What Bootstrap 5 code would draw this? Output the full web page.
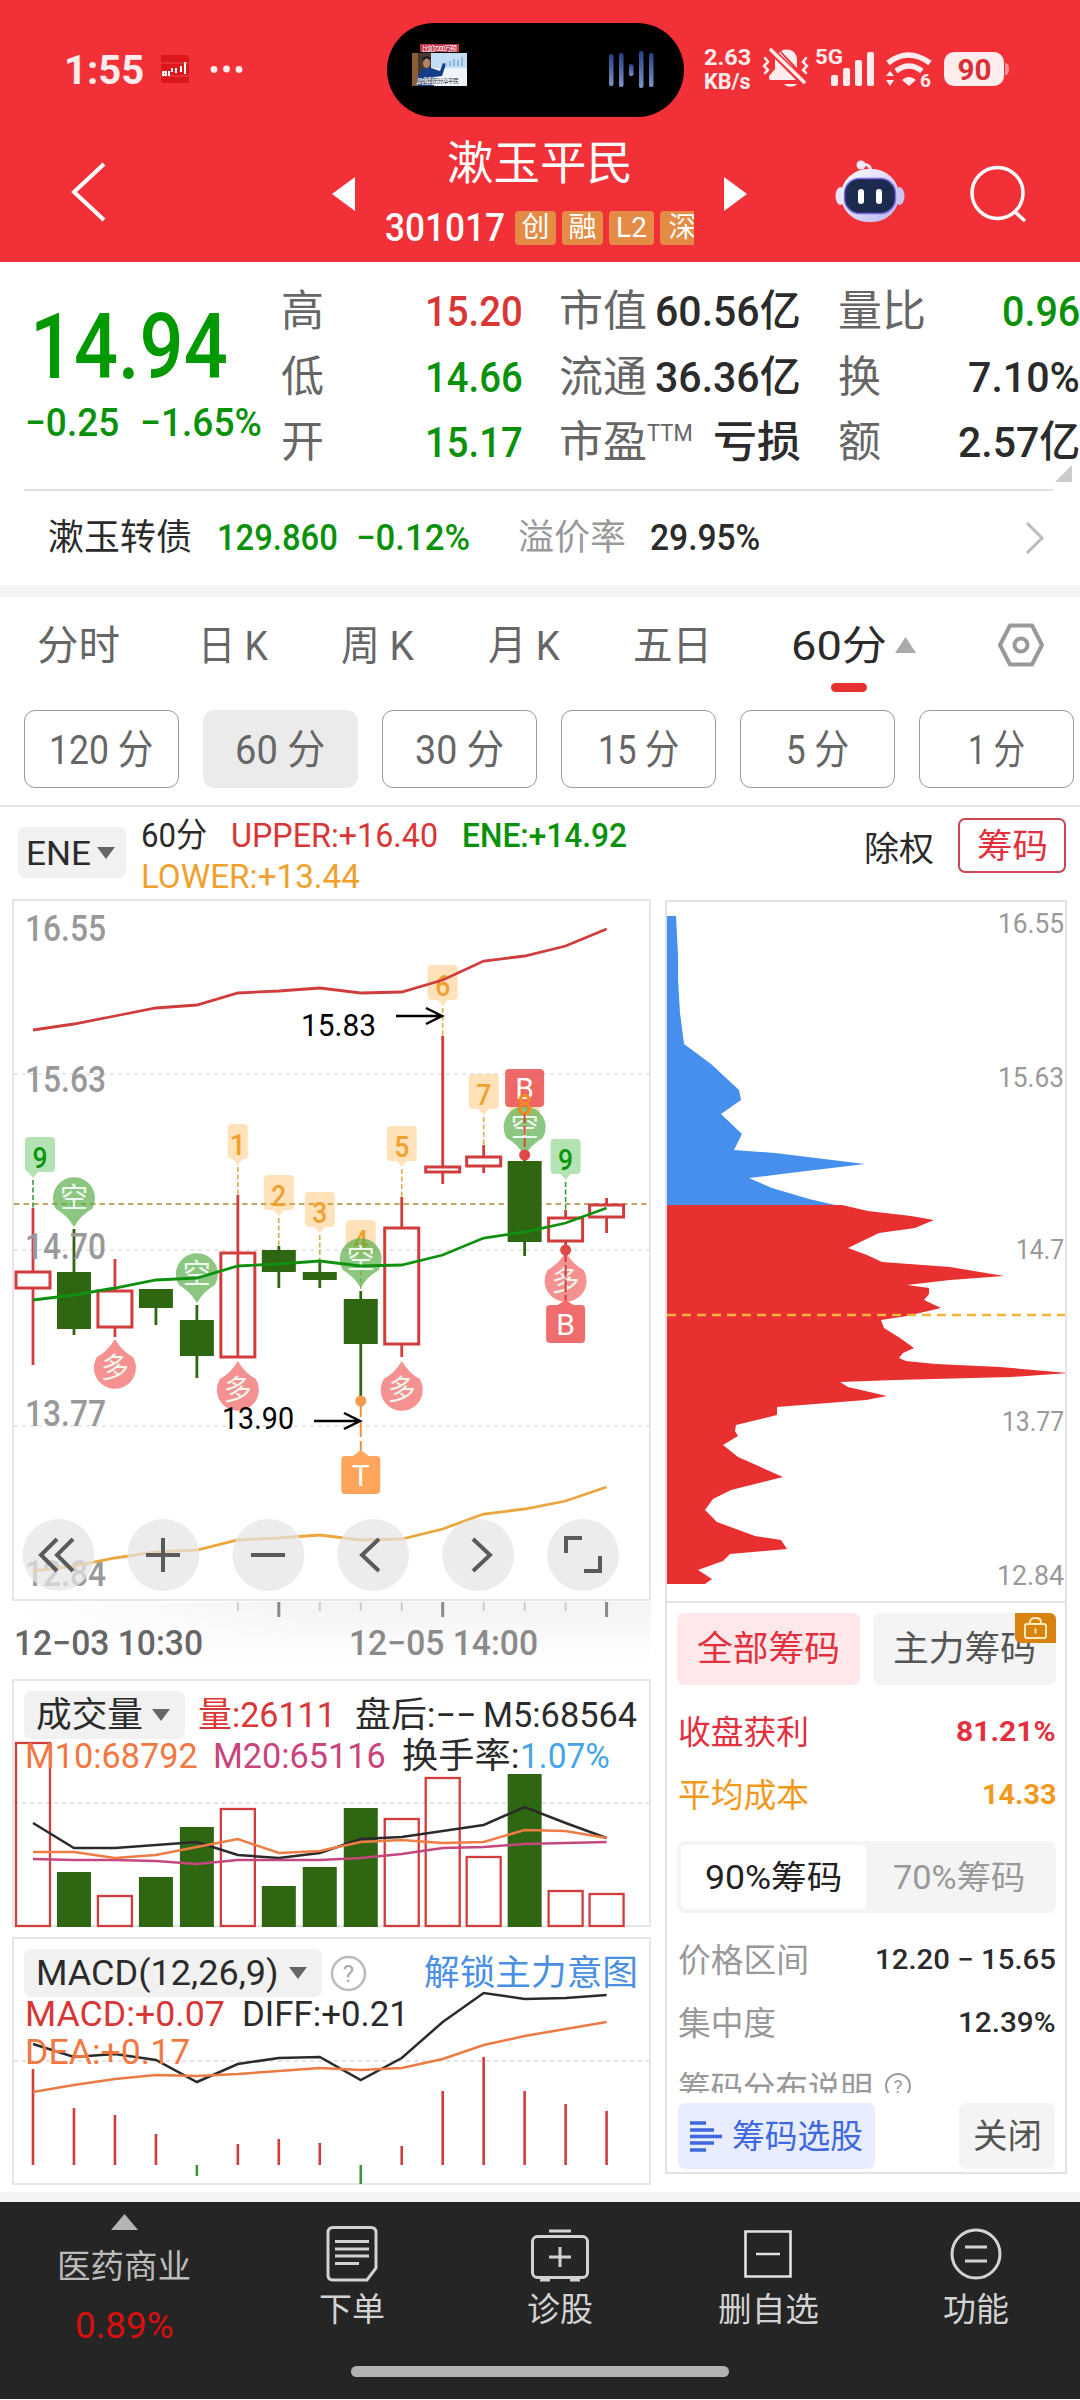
<!DOCTYPE html>
<html lang="zh-CN">
<head>
<meta charset="utf-8">
<title>漱玉平民 301017</title>
<link rel="stylesheet" href="https://cdn.jsdelivr.net/npm/bootstrap@5.3.0/dist/css/bootstrap.min.css">
<style>
body{width:1080px;height:2400px;overflow:hidden;background:#fff;color:#2b2b2b;font-family:Roboto,"Noto Sans CJK SC",sans-serif;line-height:1}
svg{display:block;flex:none}
svg text{font-family:Roboto,"Noto Sans CJK SC",sans-serif}
[data-w]{display:inline-block;white-space:nowrap;transform-origin:left center;flex:none}
.up{color:#d93636}.down{color:#099109}.gold{color:#f0a02c}
.w5{font-weight:500}
.topbar{background:#f23037;height:262px;color:#fff}
.status{display:grid;grid-template-columns:387px 297px 1fr;height:140px}
.clock{font-size:41px;font-weight:700;color:#ffecec;margin-left:64px}
.island{height:94px;margin-top:23px;border-radius:47px;background:#000}
.speed{font-size:22px;font-weight:700;color:#ffecec;margin-left:20px;line-height:24px;width:55px}
.titlebar{display:grid;grid-template-columns:332px 24px 368px 24px 1fr;height:122px}
.stock{font-size:46px;height:46px}
.codeline{margin:25px 0 0 29px;width:309px;height:34px;gap:6px;overflow:hidden;font-size:39px}
.tagbox{background:#e48b45;border-radius:4px;height:34px;width:41px;font-size:28px;flex:none}
.tagbox.wide{width:45px}
.quote{display:grid;grid-template-columns:281px 278px 279px 242px;height:227px}
.lastprice{font-size:90px;font-weight:500;color:#009900;margin:40px 0 0 30px;height:92px}
.chg{font-size:39px;margin-left:25px;gap:21px}
.qcol{padding-top:17px;font-size:43px}
.qcol>div{height:65.5px}
.lab{color:#666}
.c1{padding-right:36px}.c2{padding-right:37px}
.ttm{font-size:23px;margin-bottom:18px}
.fold{right:8px;top:203px}
.bond{margin:0 27px 0 24px;border-top:2px solid #e0e0e0;height:96px;font-size:36px;padding-left:24px}
.band{background:#f4f4f4;height:12px}
.tabs{height:95px;display:grid;justify-items:start;grid-template-columns:161px 143px 147px 145px 156px 193px 1fr;padding-left:37px;font-size:41px;color:#666}
.tabs>span{padding-top:4px}
.tabs .on{color:#2b2b2b;padding-left:2px}
.redbar{width:36px;height:9px;border-radius:5px;background:#e63030;left:42px;bottom:0}
.pills{margin-top:18px;padding-left:24px;gap:24px;height:97px;border-bottom:2px solid #e6e6e6;font-size:41px;color:#666}
.pillbox{width:155px;height:78px;border:1.5px solid #999;border-radius:11px;flex:none;padding-top:2px}
.pillbox.on{background:#ebebeb;border-color:#ebebeb}
.legendrow{height:88px;padding-left:18px;font-size:34px}
.drop{background:#f1f1f1;border-radius:7px}
.ene{width:108px;height:51px;margin-top:20px;padding-left:8px;gap:6px}
.lines{margin:7px 0 0 15px;width:723px}
.lines>div{height:41px;gap:24px}
.chipbtn{width:108px;height:55px;border:2px solid #cf4452;border-radius:7px;color:#e2303f;margin:11px 12px 0 24px}
.leftcol{width:660px}
.indic{left:24px;right:22px;font-size:35px}
.r1{height:48px}.r2{height:34px}
.volbtn{width:161px;height:48px;padding-left:12px;gap:9px}
.macdbtn{width:298px;height:48px;padding-left:12px;gap:10px}
.panel{width:402px;height:1274px;margin:5px 0 0 5px;border:2px solid #e2e2e2}
.chipinfo{border-top:2px solid #e2e2e2;padding:10px 9px 0 10px;font-size:33px}
.bigbtn{width:183px;height:72px;border-radius:7px;font-size:35px}
.all{background:#ffe8ea;color:#e2303f}.main{background:#f4f4f4;color:#555}
.lockbadge{right:0;top:0;width:41px;height:30px;background:#d8820f;border-radius:0 6px 0 6px}
.inforow{height:63px;padding-left:1px}
.seg{background:#f4f4f4;border-radius:8px;height:72px;padding:4px;color:#999;margin-top:14px}
.seg .on{background:#fff;color:#222;width:185px;height:64px;border-radius:5px}
.clipped{height:38px;overflow:hidden;padding:17px 0 0 1px;gap:11px;color:#999}
.foot{margin:10px 1px 0 1px}
.pick{width:197px;height:66px;background:#e8edff;border-radius:7px;color:#3f68e0;gap:10px;padding-left:12px}
.closebtn{width:96px;height:66px;background:#f4f4f4;border-radius:7px;color:#555;font-size:34px}
.bottomnav{background:#252525;height:197px;display:grid;grid-template-columns:248px repeat(4,208px);color:#d2d2d2;font-size:33px}
.home{width:378px;height:11px;border-radius:6px;background:#b3b3b3;left:351px;bottom:22px}
.navicon{height:58px;margin-top:22px}
.navtext{margin-top:11px}
</style>
</head>
<body>
<header class="topbar">
  <div class="status">
    <div class="d-flex align-items-center">
      <span class="clock" data-w="80">1:55</span>
      <svg style="margin-left:11px" width="100" height="40" viewBox="155 50 100 40"><rect x="161" y="55" width="28" height="28" rx="2" fill="#dc171d"/><path d="M161 63h28M161 76h28" stroke="#ee4a4a" stroke-width="1"/><path d="M163 75h3v-3h-3zM169 76v-5M172 72v-4M176 73v-5M181 72v-6M185 74V62" stroke="#fff" stroke-width="2" fill="none"/><g fill="#ffecec"><circle cx="214" cy="69.500" r="3.400"/><circle cx="226.500" cy="69" r="3.400"/><circle cx="239" cy="69.500" r="3.400"/></g></svg>
    </div>
    <div class="island">
      <svg width="297" height="94" viewBox="387 23 297 94">
        <defs><linearGradient id="wv" x1="0" y1="0" x2="0" y2="1"><stop offset="0" stop-color="#253f85"/><stop offset="1" stop-color="#7f95c4"/></linearGradient></defs>
        <rect x="420" y="44" width="39" height="8" fill="#bf3144"/><text x="422" y="51" font-size="7" fill="#fff" textLength="35">比如7200万预</text>
        <rect x="412" y="53" width="55" height="33" fill="#c3ddf5"/><rect x="412" y="53" width="19" height="33" fill="#4a3931"/><path d="M412 53h6v33h-6z" fill="#8b5c37"/><path d="M430 68h37v18h-37z" fill="#edf5fb"/><path d="M418 86c-1-10 1-16 7-18h6l9 3 3-8 3 1-4 12-8 1v9z" fill="#143f86"/><ellipse cx="426.500" cy="63" rx="3.500" ry="5" fill="#b98168"/><path d="M423 60q3-5 7-1" stroke="#151515" stroke-width="2" fill="none"/><path d="M446 66v-3M450 66v-5M454 66v-7M458 66v-6M462 66v-9" stroke="#91b7e5" stroke-width="2"/><text x="417" y="83" font-size="6" fill="#223" stroke="#fff" stroke-width="1" paint-order="stroke" textLength="42">从业经历分享平民</text>
        <g fill="url(#wv)"><rect x="609" y="54" width="4.500" height="32" rx="2"/><rect x="619" y="53" width="4.500" height="34" rx="2"/><rect x="629" y="64" width="4.500" height="12" rx="2"/><rect x="639" y="51" width="4.500" height="37" rx="2"/><rect x="649" y="53" width="4.500" height="34" rx="2"/></g>
      </svg>
    </div>
    <div class="d-flex align-items-center">
      <div class="speed"><div data-w="47">2.63</div><div data-w="47">KB/s</div></div>
      <svg width="260" height="50" viewBox="759 45 260 50">
        <g fill="#ffecec">
          <path d="M785 85a6 3 0 0 0 11 0l1-1h-13zM769 79v-3l6-7V60c0-4 3-7 5-8l19 22 4 5-1 1h-32zM781 51c9-4 16 1 16 9v8z"/>
          <text x="815" y="64" font-size="21" font-weight="700" textLength="28" lengthAdjust="spacingAndGlyphs">5G</text>
          <rect x="831" y="75" width="7" height="11" rx="2"/><rect x="843" y="68" width="7" height="18" rx="2"/><rect x="855" y="60" width="7" height="26" rx="2"/><rect x="867" y="52" width="7" height="34" rx="2"/>
          <path d="M902 80q7-6 14 0l-7 6zM886 76l4-5 4 5zM886 80l4 6 4-6z"/>
          <text x="920" y="87" font-size="19" font-weight="700">6</text>
          <rect x="944" y="52" width="60" height="34" rx="10"/>
        </g>
        <path d="M1005 63q4 0 4 6t-4 6z" fill="#f79194"/>
        <text x="957.500" y="80" font-size="29" font-weight="700" fill="#d93037" textLength="34" lengthAdjust="spacingAndGlyphs">90</text>
        <g fill="none" stroke="#ffecec" stroke-linecap="round"><path d="M771 50l33 33" stroke="#f23037" stroke-width="7"/><path d="M771 50l33 32" stroke-width="3.600"/><path d="M765 58l3 4-4 4 4 4-3 3M806 58l-3 4 4 4-4 4 3 3" stroke-width="2.500"/><path d="M888 63q20-16 42 0M896 71q13-10 26 0" stroke-width="5.500" stroke-linecap="butt"/></g>
      </svg>
    </div>
  </div>
  <div class="titlebar">
    <svg width="332" height="122" viewBox="0 140 332 122"><path d="M104 164 74 192l30 28" fill="none" stroke="#fff" stroke-width="4"/></svg>
    <svg width="24" height="108" viewBox="0 0 24 108"><path d="M0 54 23 37v34z" fill="#fff"/></svg>
    <div>
      <div class="stock d-flex align-items-center justify-content-center"><span data-w="186">漱玉平民</span></div>
      <div class="codeline d-flex align-items-center">
        <span class="w5" data-w="120">301017</span>
        <span class="tagbox ms-1 d-flex align-items-center justify-content-center">创</span>
        <span class="tagbox d-flex align-items-center justify-content-center">融</span>
        <span class="tagbox wide d-flex align-items-center justify-content-center">L2</span>
        <span class="tagbox wide d-flex align-items-center justify-content-center">深</span>
      </div>
    </div>
    <svg width="24" height="108" viewBox="0 0 24 108"><path d="M23 54 0 37v34z" fill="#fff"/></svg>
    <svg width="332" height="122" viewBox="748 140 332 122">
      <defs><linearGradient id="bot" x1="0" y1="0" x2="1" y2="1"><stop offset="0" stop-color="#fff"/><stop offset="1" stop-color="#b9b4ef"/></linearGradient></defs>
      <path d="M861 165q9-2 10 6" stroke="#ece6fa" stroke-width="3" fill="none"/><circle cx="861" cy="165" r="4.500" fill="#f1e9fa"/>
      <ellipse cx="840.500" cy="196" rx="5" ry="9" fill="#e9e6fb"/><ellipse cx="899.500" cy="196" rx="5" ry="9" fill="#c9c4f4"/>
      <rect x="841" y="169" width="58" height="53" rx="27" fill="url(#bot)"/><rect x="844.500" y="178.500" width="51" height="35" rx="15" fill="#1c2a4d" stroke="#7c6ae0" stroke-width="1.500"/>
      <rect x="858" y="189" width="6" height="15" rx="3" fill="#fff"/><rect x="876" y="189" width="6" height="15" rx="3" fill="#fff"/>
      <g fill="none" stroke="#fff" stroke-width="3.500"><circle cx="997.500" cy="193" r="25.500"/><path d="M1014 211l11 10"/></g>
    </svg>
  </div>
</header>

<section class="quote position-relative">
  <div>
    <div class="lastprice d-flex align-items-center"><span data-w="198">14.94</span></div>
    <div class="chg d-flex align-items-center down w5" style="padding-top:10px"><span data-w="94">−0.25</span><span data-w="122">−1.65%</span></div>
  </div>
  <div class="qcol c1">
    <div class="d-flex align-items-center justify-content-between"><span class="lab">高</span><span class="up w5" data-w="98">15.20</span></div>
    <div class="d-flex align-items-center justify-content-between"><span class="lab">低</span><span class="down w5" data-w="98">14.66</span></div>
    <div class="d-flex align-items-center justify-content-between"><span class="lab">开</span><span class="down w5" data-w="98">15.17</span></div>
  </div>
  <div class="qcol c2">
    <div class="d-flex align-items-center justify-content-between"><span class="lab" data-w="88">市值</span><span class="w5" data-w="146">60.56亿</span></div>
    <div class="d-flex align-items-center justify-content-between"><span class="lab" data-w="88">流通</span><span class="w5" data-w="146">36.36亿</span></div>
    <div class="d-flex align-items-center"><span class="lab" data-w="88">市盈</span><span class="lab ttm" data-w="46">TTM</span><span class="w5 ms-auto" data-w="88">亏损</span></div>
  </div>
  <div class="qcol">
    <div class="d-flex align-items-center justify-content-between"><span class="lab" data-w="88">量比</span><span class="down w5" data-w="78">0.96</span></div>
    <div class="d-flex align-items-center justify-content-between"><span class="lab">换</span><span class="w5" data-w="112">7.10%</span></div>
    <div class="d-flex align-items-center justify-content-between"><span class="lab">额</span><span class="w5" data-w="122">2.57亿</span></div>
  </div>
  <svg class="fold position-absolute" width="17" height="17"><path d="M17 0v17H0z" fill="#ccc"/></svg>
</section>
<section class="bond d-flex align-items-center">
  <span data-w="144">漱玉转债</span><span class="down w5" style="margin-left:25px" data-w="121">129.860</span><span class="down w5" style="margin-left:18px" data-w="114">−0.12%</span>
  <span class="ms-5" style="color:#999" data-w="108">溢价率</span><span class="w5 ms-4" data-w="110">29.95%</span>
  <svg class="ms-auto me-2" width="20" height="34"><path d="M2 2l15 15L2 32" fill="none" stroke="#bbb" stroke-width="3"/></svg>
</section>
<div class="band"></div>

<nav class="tabs align-items-center">
  <span data-w="83">分时</span><span data-w="70">日 K</span><span data-w="73">周 K</span><span data-w="72">月 K</span><span data-w="79">五日</span>
  <div class="on position-relative h-100 d-flex align-items-center"><span class="pt-1" data-w="96">60分</span><svg class="ms-2" width="21" height="16"><path d="M10.500 0 21 16H0z" fill="#aaa"/></svg><i class="redbar position-absolute"></i></div>
  <svg class="ms-3" width="48" height="48" viewBox="-24 -24 48 48"><g transform="translate(-1 0)" fill="none" stroke="#999" stroke-width="4" stroke-linejoin="round"><path d="M-11-19.500h22L21 0 11 19.500h-22L-21 0z"/><circle r="6.500"/></g></svg>
</nav>
<div class="pills d-flex">
  <span class="pillbox d-flex align-items-center justify-content-center"><span data-w="104">120 分</span></span>
  <span class="pillbox on d-flex align-items-center justify-content-center"><span data-w="90">60 分</span></span>
  <span class="pillbox d-flex align-items-center justify-content-center"><span data-w="89">30 分</span></span>
  <span class="pillbox d-flex align-items-center justify-content-center"><span data-w="81">15 分</span></span>
  <span class="pillbox d-flex align-items-center justify-content-center"><span data-w="63">5 分</span></span>
  <span class="pillbox d-flex align-items-center justify-content-center"><span data-w="57">1 分</span></span>
</div>
<div class="legendrow d-flex">
  <div class="drop ene d-flex align-items-center"><span data-w="65">ENE</span><svg width="18" height="12"><path d="M0 0h18L9 12z" fill="#666"/></svg></div>
  <div class="lines">
    <div class="d-flex align-items-center"><span data-w="66">60分</span><span class="up" data-w="207">UPPER:+16.40</span><span class="down w5" data-w="165">ENE:+14.92</span></div>
    <div class="d-flex align-items-center gold"><span data-w="219">LOWER:+13.44</span></div>
  </div>
  <div class="d-flex align-items-center" style="height:84px"><span data-w="70">除权</span></div>
  <div class="chipbtn d-flex align-items-center justify-content-center"><span data-w="71">筹码</span></div>
</div>

<main class="d-flex">
  <div class="leftcol">
    <svg id="price" width="660" height="776" viewBox="0 896 660 776"></svg>
    <div class="position-relative">
      <svg id="vol" width="660" height="262" viewBox="0 1672 660 262"></svg>
      <div class="indic position-absolute" style="top:20px">
        <div class="r1 d-flex align-items-center"><span class="drop volbtn d-flex align-items-center"><span data-w="107">成交量</span><svg width="18" height="12"><path d="M0 0h18L9 12z" fill="#666"/></svg></span><span class="up" style="margin-left:13px" data-w="138">量:26111</span><span style="margin-left:19px" data-w="122">盘后:−−</span><span style="margin-left:7px" data-w="154">M5:68564</span></div>
        <div class="r2 d-flex align-items-center"><span style="margin-left:1px;color:#f27842" data-w="173">M10:68792</span><span style="margin-left:15px;color:#c9447c" data-w="173">M20:65116</span><span style="margin-left:17px" data-w="117">换手率:</span><span style="color:#45a5e6" data-w="90">1.07%</span></div>
      </div>
    </div>
    <div class="position-relative">
      <svg id="macd" width="660" height="254" viewBox="0 1934 660 254"></svg>
      <div class="indic position-absolute" style="top:16px">
        <div class="r1 d-flex align-items-center"><span class="drop macdbtn d-flex align-items-center"><span data-w="243">MACD(12,26,9)</span><svg width="18" height="12"><path d="M0 0h18L9 12z" fill="#666"/></svg></span><svg class="ms-2" width="37" height="37"><circle cx="18.500" cy="18.500" r="16.500" fill="none" stroke="#bbb" stroke-width="2.500"/><text x="18.500" y="27" text-anchor="middle" font-size="24" fill="#aaa">?</text></svg><span class="ms-auto" style="color:#4a90e2" data-w="214">解锁主力意图</span></div>
        <div class="d-flex align-items-center" style="height:34px"><span class="up" style="margin-left:1px" data-w="200">MACD:+0.07</span><span style="margin-left:17px" data-w="167">DIFF:+0.21</span></div>
        <div class="d-flex align-items-center" style="height:42px"><span style="margin-left:1px;color:#f27842" data-w="165">DEA:+0.17</span></div>
      </div>
    </div>
  </div>
  <aside class="panel">
    <svg id="dist" width="398" height="699" viewBox="667 903 398 699"></svg>
    <div class="chipinfo">
      <div class="d-flex justify-content-between">
        <span class="bigbtn all d-flex align-items-center justify-content-center"><span data-w="143">全部筹码</span></span>
        <span class="bigbtn main position-relative d-flex align-items-center justify-content-center"><span data-w="143">主力筹码</span>
          <span class="lockbadge position-absolute d-flex align-items-center justify-content-center"><svg width="25" height="24"><g fill="none" stroke="#ffe9b5" stroke-width="2"><rect x="2" y="8" width="21" height="14" rx="2"/><path d="M7 8V6q0-4 5.500-4T18 6v2M12.500 12.500v5"/></g></svg></span></span>
      </div>
      <div class="inforow d-flex align-items-center justify-content-between" style="margin-top:16px;color:#e2303f"><span data-w="131">收盘获利</span><span class="fs-3 fw-bold" data-w="100">81.21%</span></div>
      <div class="inforow d-flex align-items-center justify-content-between" style="color:#f2991c"><span data-w="131">平均成本</span><span class="fs-3 fw-bold" data-w="74">14.33</span></div>
      <div class="seg d-flex"><span class="on d-flex align-items-center justify-content-center"><span data-w="137">90%筹码</span></span><span class="flex-fill d-flex align-items-center justify-content-center"><span data-w="132">70%筹码</span></span></div>
      <div class="inforow d-flex align-items-center justify-content-between mt-3"><span style="color:#999" data-w="131">价格区间</span><span class="fs-3 w5" data-w="181">12.20 − 15.65</span></div>
      <div class="inforow d-flex align-items-center justify-content-between"><span style="color:#999" data-w="98">集中度</span><span class="fs-3 w5" data-w="98">12.39%</span></div>
      <div class="clipped d-flex"><span data-w="195">筹码分布说明</span><svg width="28" height="28"><circle cx="14" cy="14" r="12" fill="none" stroke="#999" stroke-width="2"/><text x="14" y="21" font-size="19" text-anchor="middle" fill="#999">?</text></svg></div>
      <div class="foot d-flex justify-content-between">
        <span class="pick d-flex align-items-center"><svg width="32" height="31" viewBox="0 0 32 31"><path d="M0 2h16M0 9h24M0 15.500h32M0 22h24M0 29h16" stroke="#3f68e0" stroke-width="3.600"/></svg><span data-w="131">筹码选股</span></span>
        <span class="closebtn d-flex align-items-center justify-content-center"><span data-w="69">关闭</span></span>
      </div>
    </div>
  </aside>
</main>
<div class="band" style="height:10px;margin-top:5px"></div>

<footer class="bottomnav position-relative text-center">
  <div><svg class="mx-auto" style="margin-top:12px" width="27" height="16"><path d="M13.500 0 27 16H0z" fill="#b5b5b5"/></svg><div style="margin-top:20px;color:#bbb"><span data-w="134">医药商业</span></div><div style="margin-top:25px;color:#d90f0f;font-size:36px"><span data-w="99">0.89%</span></div></div>
  <div><svg class="navicon mx-auto" width="60" viewBox="-2 0 60 58"><g fill="none" stroke="#d2d2d2" stroke-width="3"><path d="M9 3.500h38q5 0 5 5V44l-9 12H9q-5 0-5-5V8.500q0-5 5-5zM11 17.500h34M11 25h34M11 32h34M11 39.500h24"/></g></svg><div class="navtext"><span data-w="66">下单</span></div></div>
  <div><svg class="navicon mx-auto" width="62" viewBox="0 0 62 58"><g fill="none" stroke="#d2d2d2" stroke-width="3"><rect x="3.500" y="12.500" width="55" height="41" rx="5"/><path d="M20 7h22M31 23v20M20 33h22" /><path d="M11 55.500h10M41 55.500h10" stroke-width="4"/></g></svg><div class="navtext"><span data-w="66">诊股</span></div></div>
  <div><svg class="navicon mx-auto" width="60" viewBox="0 0 60 58"><path d="M7.500 7.500h45v45h-45zM18 30h24" fill="none" stroke="#e2e2e2" stroke-width="2.600"/></svg><div class="navtext"><span data-w="101">删自选</span></div></div>
  <div><svg class="navicon mx-auto" width="60" viewBox="0 0 60 58"><g fill="none" stroke="#d2d2d2" stroke-width="3"><circle cx="30" cy="30" r="24"/><path d="M19 23h22M19 37h22"/></g></svg><div class="navtext"><span data-w="66">功能</span></div></div>
  <i class="home position-absolute"></i>
</footer>

<script src="https://cdn.jsdelivr.net/npm/bootstrap@5.3.0/dist/js/bootstrap.bundle.min.js"></script>
<script>
document.querySelectorAll('[data-w]').forEach(function (e) {
  var n = e.offsetWidth, w = +e.dataset.w;
  e.style.transform = 'scaleX(' + w / n + ')';
  e.style.marginRight = (w - n) + 'px';
});
var X = i => 33 + 40.97 * i, RED = '#d13c3c', GREEN = '#2f6612';
var rect = (x, y, w, h, f, r, extra) => `<rect x="${x}" y="${y}" width="${w}" height="${h}" fill="${f}" rx="${r || 0}" ${extra || ''}/>`;
var line = (x1, y1, x2, y2, c, w, extra) => `<path d="M${x1} ${y1}L${x2} ${y2}" stroke="${c}" stroke-width="${w}" fill="none" ${extra || ''}/>`;
var text = (x, y, s, size, c, w, extra) => `<text x="${x}" y="${y}" font-size="${size}" fill="${c}" ${w ? `textLength="${w}" lengthAdjust="spacingAndGlyphs"` : ''} ${extra || ''}>${s}</text>`;
var poly = (ys, c, w) => `<polyline points="${ys.map((y, i) => X(i) + ',' + y).join(' ')}" fill="none" stroke="${c}" stroke-width="${w}"/>`;
var frame = (y, h) => rect(13, y, 637, h, 'none', 0, 'stroke="#e6e6e6" stroke-width="2"');

// Price chart
var o = '<defs><linearGradient id="sh" x1="0" y1="0" x2="0" y2="1"><stop offset="0" stop-color="#f3f3f3"/><stop offset="1" stop-color="#fff"/></linearGradient><linearGradient id="fade" x1="0" y1="0" x2="1" y2="0"><stop offset="0" stop-color="#fff"/><stop offset="1" stop-color="#fff" stop-opacity="0"/></linearGradient></defs>';
o += rect(13, 1603, 638, 60, 'url(#sh)') + rect(13, 1603, 300, 60, 'url(#fade)') + frame(901, 700);
[1075, 1251, 1427].forEach(y => o += line(14, y, 650, y, '#e0e0e0', 1.5, 'stroke-dasharray="4 4"'));
o += line(14, 1205, 650, 1205, '#c0a468', 2, 'stroke-dasharray="5.500 4"');
// body top, body bottom, wick top, wick bottom, rising
[[1273,1289,1209,1366,1],[1273,1330,1230,1336,0],[1292,1328,1260,1338,1],[1290,1309,1290,1326,0],[1321,1357,1306,1379,0],[1254,1358,1196,1253,1],[1251,1273,1247,1289,0],[1273,1281,1262,1289,0],[1300,1345,1292,1402,0],[1229,1345,1198,1358,1],[1168,1173,1037,1185,1],[1158,1167,1146,1174,1],[1162,1243,1156,1257,0],[1219,1242,1211,1252,1],[1206,1218,1199,1234,1]].forEach((k, i) => {
  var x = X(i), c = k[4] ? RED : GREEN;
  if (k[4]) o += line(x, k[2], x, k[0], c, 2.8) + line(x, k[1], x, k[3], c, 2.8) + rect(x - 17, k[0], 34, k[1] - k[0], 'none', 0, `stroke="${c}" stroke-width="3"`);
  else o += line(x, k[2], x, k[3], c, 2.8) + rect(x - 17, k[0], 34, k[1] - k[0], c);
});
[['16.55', 942], ['15.63', 1093], ['14.70', 1260], ['13.77', 1427], ['12.84', 1587]].forEach(t => o += text(25, t[1], t[0], 36, '#999', 81, 'font-weight="500"'));
// numbered flags: index, number, top, dash end, green
[[0,9,1138,1209,1,-1],[5,1,1125,1196],[6,2,1176,1247],[7,3,1193,1262],[8,4,1221,1290],[9,5,1127,1198],[10,6,966,1037],[11,7,1075,1146],[12,8,1085,1156],[13,9,1140,1211,1]].forEach(f => {
  var x = X(f[0]), g = f[4], w = f[1] == 1 ? 20 : 30, l = f[5] ? x - 8 : x - w / 2;
  o += `<g fill="${g ? '#b3e2b3' : '#ffad3b'}" opacity="${g ? 1 : .35}"><rect x="${l}" y="${f[2]}" width="${w}" height="35" rx="4"/><path d="M${x - 5} ${f[2] + 35}h10l-5 6z"/></g>`;
  o += line(x, f[2] + 43, x, f[3], g ? '#3a9a3a' : '#d9ae4c', 1.6, 'stroke-dasharray="5 2.500"');
  o += text(l + w / 2, f[2] + 31, f[1], 29, g ? '#0b950b' : '#f0a02c', f[1] == 1 ? 0 : 15, 'text-anchor="middle" font-weight="500"');
});
var bubble = (i, cy, dir) => { var x = X(i), c = dir > 0 ? 'rgba(85,173,70,.68)' : 'rgba(241,98,98,.7)';
  return `<path d="M${x - 18} ${cy + dir * 11}A21 21 0 1 ${dir > 0 ? 1 : 0} ${x + 18} ${cy + dir * 11}Q${x + 7} ${cy + dir * 17} ${x} ${cy + dir * 29}Q${x - 7} ${cy + dir * 17} ${x - 18} ${cy + dir * 11}z" fill="${c}"/>` +
  text(x, cy + 10, dir > 0 ? '空' : '多', 28, '#eef8ee', 0, 'text-anchor="middle"'); };
[[1, 1199], [4, 1275], [8, 1260], [12, 1128]].forEach(b => o += bubble(b[0], b[1], 1));
[[2, 1369], [5, 1391], [9, 1391], [13, 1282]].forEach(b => o += bubble(b[0], b[1], -1));
o += poly([1031,1025,1017,1009,1006,994,992,989,994,993,981,962,957,947,930], RED, 2.8);
o += poly([1301,1296,1289,1281,1279,1267,1265,1262,1267,1266,1256,1239,1233,1224,1209], '#109010', 2.8);
o += poly([1572,1567,1559,1553,1551,1541,1539,1536,1541,1540,1530,1515,1510,1502,1488], '#eba73d', 2.8);
var box = (i, y, s, c) => rect(X(i) - 19.5, y, 39, 38, c, 4) + text(X(i), y + 30, s, 30, '#fff', 0, 'text-anchor="middle"');
o += '<g opacity=".88">' + box(12, 1070, 'B', '#ec5555') + '</g>' + text(X(12), 1116, '8', 29, '#f58a22', 15, 'text-anchor="middle" font-weight="500"');
o += line(X(12), 1115, X(12), 1156, '#d9493c', 2, 'stroke-dasharray="9 3"') + `<circle cx="${X(12)}" cy="1156" r="5.500" fill="#e04848"/>`;
o += line(X(13), 1251, X(13), 1302, RED, 2, 'stroke-dasharray="12 3"') + `<circle cx="${X(13)}" cy="1251" r="5.500" fill="#e04848"/><path d="M${X(13) - 8} 1306l8-5 8 5z" fill="#f06d6d"/>` + box(13, 1306, 'B', '#f06d6d');
o += line(X(8), 1402, X(8), 1452, '#ef8f3f', 2, 'stroke-dasharray="16 4"') + `<circle cx="${X(8)}" cy="1402" r="5.500" fill="#f59a4c"/><path d="M${X(8) - 8} 1457l8-6 8 6z" fill="#ffa55c"/>` + box(8, 1457, 'T', '#ffa55c');
var arrow = (x, y) => `<path d="M${x - 46} ${y}h44M${x - 16} ${y - 8}L${x} ${y}L${x - 16} ${y + 8}" fill="none" stroke="#000" stroke-width="2.500"/>`;
o += text(301, 1037, '15.83', 31, '#000', 75) + arrow(442, 1017) + text(222, 1430, '13.90', 31, '#000', 72) + arrow(360, 1422);
// round chart controls
['M57 1540L41 1556L57 1572M73 1540L57 1556L73 1572', 'M146 1556h34M163 1539v34', 'M251 1556h34', 'M379 1540L362 1556L379 1572', 'M473 1540L490 1556L473 1572', 'M566 1554v-15h16M584 1572h16v-15'].forEach((d, i) => {
  o += `<circle cx="${58.5 + 104.9 * i}" cy="1556" r="36" fill="#e5e5e5" fill-opacity=".72"/><path d="${d}" fill="none" stroke="#5a5a5a" stroke-width="4"/>`; });
for (var i = 5; i < 15; i++) { var big = [6, 10, 14].includes(i); o += line(X(i), 1603, X(i), big ? 1618 : 1612, big ? '#8a8a8a' : '#ccc', big ? 3 : 2); }
o += text(14, 1656, '12−03 10:30', 35, '#666', 189, 'font-weight="500"') + text(349, 1656, '12−05 14:00', 35, '#8a8a8a', 189, 'font-weight="500"');
document.getElementById('price').innerHTML = o;

// Volume bars
o = frame(1681, 246) + line(14, 1804, 650, 1804, '#e3e3e3', 2, 'stroke-dasharray="4 4"');
[[1743,1],[1873],[1896,1],[1878],[1828],[1809,1],[1887],[1868],[1809],[1819,1],[1778,1],[1857,1],[1775],[1891,1],[1894,1]].forEach((v, i) => {
  o += v[1] ? rect(X(i) - 17, v[0] + 1, 34, 1926 - v[0], 'none', 0, `stroke="${RED}" stroke-width="2.300"`) : rect(X(i) - 17, v[0], 34, 1928 - v[0], GREEN); });
o += poly([1824,1849,1849,1846,1843,1856,1859,1854,1840,1838,1832,1826,1808,1824,1839], '#2b2b2b', 2.5);
o += poly([1860,1861,1861,1862,1865,1861,1861,1861,1859,1855,1849,1848,1845,1844,1843], '#c4477e', 2.5);
o += poly([1853,1853,1859,1856,1848,1840,1854,1852,1843,1841,1844,1843,1831,1832,1839], '#ee7d45', 2.5);
document.getElementById('vol').innerHTML = o;

// MACD
o = frame(1939, 246) + line(14, 2062, 650, 2062, '#e3e3e3', 2, 'stroke-dasharray="4 4"');
[2070,2109,2116,2135,2177,2145,2140,2144,2185,2147,2092,2058,2092,2105,2112].forEach((y, i) => o += line(X(i), 2166, X(i), y, y > 2166 ? '#3f9438' : RED, 2.6));
o += poly([2045,2058,2055,2061,2083,2065,2059,2058,2081,2059,2023,1994,2000,1999,1996], '#2b2b2b', 2.5);
o += poly([2093,2086,2080,2076,2077,2075,2072,2069,2071,2069,2060,2046,2037,2030,2023], '#ea7b45', 2.5);
document.getElementById('macd').innerHTML = o;

// Cost distribution
o = '<path fill="#468fec" d="M667 917H676L678 956 678 980 680 1014 684 1045 711 1065 739 1091 741 1101 721 1115 742 1135 734 1151 775 1154 865 1165 790 1174 749 1179 772 1189 809 1200 835 1206H667z"/>';
o += '<path fill="#e83030" d="M667 1206H842L868 1212 911 1217 934 1221 915 1229 879 1234 848 1249 867 1256 882 1263 950 1268 1004 1277 950 1281 907 1286 929 1289 929 1295 924 1301 941 1309 907 1317 881 1321 884 1329 900 1339 914 1349 903 1354 899 1359 906 1362 936 1365 1000 1368 1067 1374 1011 1378 895 1381 840 1383 848 1388 887 1397 866 1401 777 1408 777 1416 736 1426 735 1432 738 1437 723 1446 738 1458 783 1478 731 1491 713 1500 705 1511 717 1523 755 1537 781 1541 787 1550 730 1555 723 1562 698 1571 712 1580 705 1585H667z"/>';
o += line(667, 1316, 1066, 1316, '#f2b53a', 2.4, 'stroke-dasharray="9 6"');
[['16.55', 934, 66], ['15.63', 1088, 66], ['14.7', 1260, 48], ['13.77', 1432, 62], ['12.84', 1586, 67]].forEach(t => o += text(1064 - t[2], t[1], t[0], 28, '#999', t[2]));
document.getElementById('dist').innerHTML = o;
</script>
</body>
</html>
